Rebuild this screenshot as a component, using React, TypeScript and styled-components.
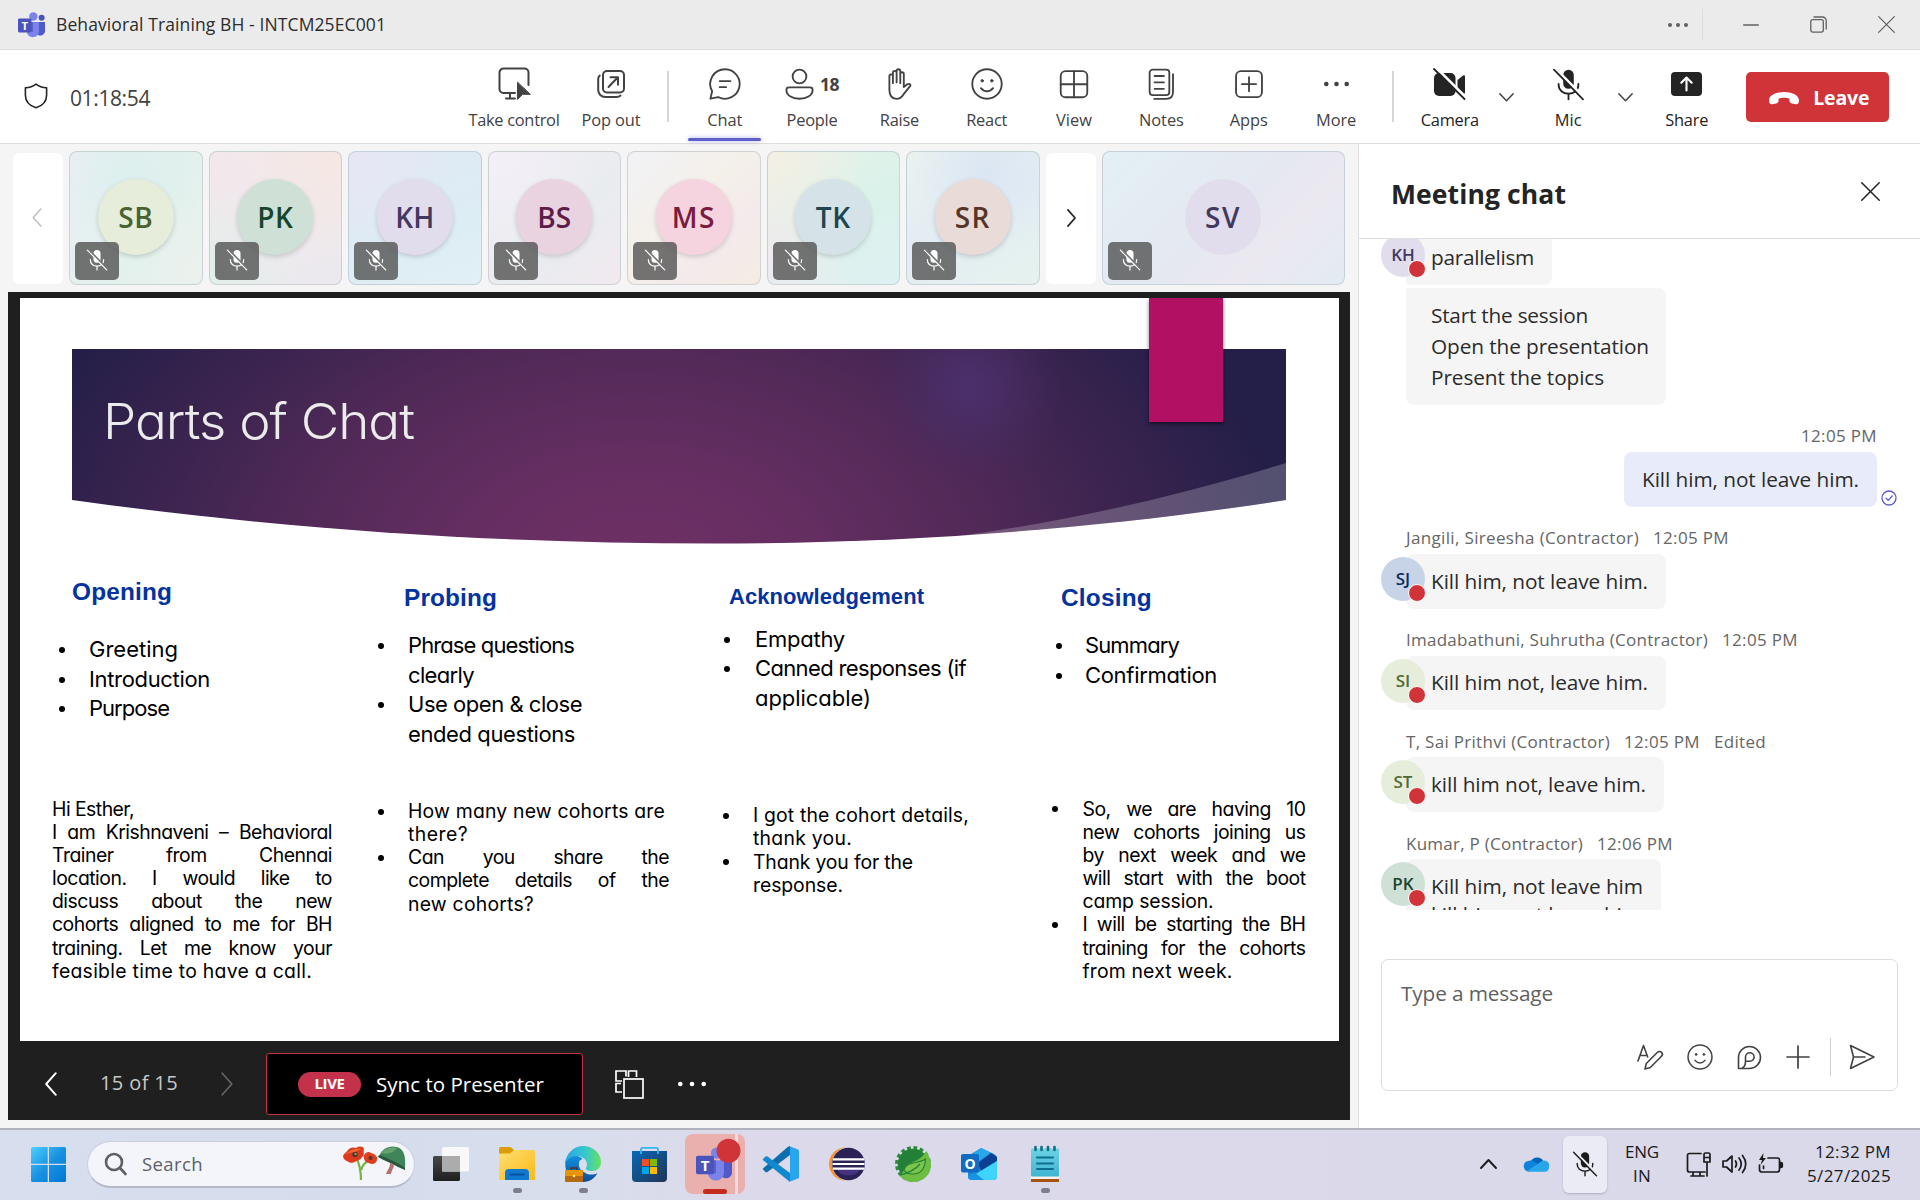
import React, { useLayoutEffect, useRef } from 'react';
import styled, { createGlobalStyle, css } from 'styled-components';

const ui = '"Open Sans", "Noto Sans", sans-serif';
const gothic = '"Century Gothic", Inter, Lato, sans-serif';

const GlobalStyle = createGlobalStyle`
  * { box-sizing: border-box; }
  body { margin: 0; background: #fff; font-family: ${ui}; color: #242424; overflow: hidden; }
  svg { display: block; flex: none; overflow: visible; }
  p, h1, h2, h3, ul { margin: 0; padding: 0; font-weight: inherit; }
`;

/* Text whose tracking is computed so that it fills a known width. */
const FitSpan = styled.span<{ $w: number }>`
  display: inline-block;
  width: ${(p) => p.$w}px;
  white-space: pre;
  flex: none;
`;

function Fit({ w, children }: { w: number; children: string }) {
  const ref = useRef<HTMLSpanElement>(null);
  useLayoutEffect(() => {
    const el = ref.current;
    if (!el) return;
    el.style.letterSpacing = '0px';
    const range = document.createRange();
    range.selectNodeContents(el);
    const scale = el.getBoundingClientRect().width / w;
    const natural = range.getBoundingClientRect().width / scale;
    el.style.letterSpacing = `${(w - natural) / children.length}px`;
  }, [w, children]);
  return <FitSpan ref={ref} $w={w}>{children}</FitSpan>;
}

const Window = styled.div`
  width: 1920px;
  height: 1200px;
  display: flex;
  flex-direction: column;
  background: #f5f5f5;
  overflow: hidden;
`;

/* ---------- title bar ---------- */

const TitleBar = styled.header`
  height: 50px;
  flex: none;
  display: flex;
  align-items: center;
  padding: 0 25px 0 18px;
  background: #ebebeb;
  border-bottom: 1px solid #dcdcdc;
  font-size: 17.5px;
  color: #2b2b2b;
`;

const TitleText = styled.h1`
  font-size: 17.5px;
  line-height: 24px;
  margin-left: 11px;
  margin-top: -2px;
  flex: 1;
`;

const WindowButtons = styled.div`
  display: flex;
  align-items: center;
  color: #616161;
`;

const TitleDivider = styled.i`
  width: 1px;
  height: 31px;
  background: #dedede;
  margin: 0 40px 0 14px;
`;

const Spacer = styled.i<{ $w: number }>`
  width: ${(p) => p.$w}px;
  flex: none;
`;

/* ---------- toolbar ---------- */

const Toolbar = styled.nav`
  height: 94px;
  flex: none;
  display: flex;
  background: #fff;
  border-bottom: 1px solid #dedede;
  color: #424242;
`;

const TimerBlock = styled.div`
  width: 457px;
  padding: 2px 0 0 24px;
  display: flex;
  align-items: center;
  gap: 22px;
  font-size: 21px;
  line-height: 28px;
  svg { color: #242424; margin-top: -3px; }
`;

const ToolButton = styled.div<{ $w: number; $dark?: boolean; $ml?: number }>`
  position: relative;
  width: ${(p) => p.$w}px;
  margin-left: ${(p) => p.$ml ?? 0}px;
  padding-top: 18px;
  display: flex;
  flex-direction: column;
  align-items: center;
  font-size: 16.4px;
  line-height: 24px;
  gap: 8px;
  color: ${(p) => (p.$dark ? '#242424' : '#424242')};
`;

const ToolIcon = styled.div`
  height: 32px;
  display: flex;
  align-items: center;
  gap: 6px;
  font-size: 17.5px;
  font-weight: 700;
`;

const ActiveLine = styled.i`
  position: absolute;
  left: 7px;
  right: 7px;
  bottom: 2px;
  height: 3px;
  border-radius: 2px;
  background: #5b5fc7;
  box-shadow: 0 0 4px rgba(91, 95, 199, 0.5);
`;

const ToolDivider = styled.i<{ $l: number; $r: number }>`
  width: 2px;
  height: 51px;
  margin: 21px ${(p) => p.$r}px 0 ${(p) => p.$l}px;
  background: #d6d6d6;
`;

const ChevronButton = styled.div<{ $w: number }>`
  width: ${(p) => p.$w}px;
  display: flex;
  justify-content: center;
  padding: 43px 0 0 2px;
`;

const LeaveButton = styled.button`
  margin: 22px 0 0 19px;
  width: 143px;
  height: 50px;
  border: 0;
  border-radius: 5px;
  background: #d13438;
  color: #fff;
  font: 700 19.5px/28px ${ui};
  display: flex;
  align-items: center;
  justify-content: center;
  gap: 14px;
  padding: 2px 0 0 4px;
`;

/* ---------- content split ---------- */

const Body = styled.main`
  height: 984px;
  flex: none;
  display: flex;
`;

const StageColumn = styled.section`
  width: 1358px;
  flex: none;
  padding: 7px 8px 0;
`;

const Gallery = styled.div`
  display: flex;
  align-items: center;
  height: 134px;
  padding-left: 5px;
  margin-bottom: 7px;
  gap: 6px;
`;

const PageArrow = styled.div<{ $dim?: boolean }>`
  width: 50px;
  height: 131px;
  border-radius: 6px;
  background: #fff;
  display: flex;
  align-items: center;
  justify-content: center;
  padding: 0 ${(p) => (p.$dim ? 2 : 0)}px 1px ${(p) => (p.$dim ? 0 : 2)}px;
  color: ${(p) => (p.$dim ? '#bdbdbd' : '#242424')};
`;

const Tile = styled.div<{ $bg: string; $wide?: boolean }>`
  position: relative;
  width: ${(p) => (p.$wide ? 243 : 133.5)}px;
  flex: none;
  height: 134px;
  padding-bottom: 2px;
  border: 1px solid rgba(150, 165, 170, 0.38);
  border-radius: 8px;
  background: ${(p) => p.$bg};
  display: flex;
  align-items: center;
  justify-content: center;
`;

const BigAvatar = styled.div<{ $bg: string; $fg: string; $flat?: boolean }>`
  width: 76px;
  height: 76px;
  border-radius: 50%;
  background: ${(p) => p.$bg};
  color: ${(p) => p.$fg};
  font-size: 28px;
  font-weight: 600;
  display: flex;
  align-items: center;
  justify-content: center;
  box-shadow: ${(p) => (p.$flat ? 'none' : '0 2px 5px rgba(0,0,0,.16)')};
`;

const MuteBadge = styled.div`
  position: absolute;
  left: 5px;
  bottom: 4px;
  width: 44px;
  height: 38px;
  padding-bottom: 2px;
  border-radius: 5px;
  background: rgba(82, 82, 82, 0.8);
  color: #fff;
  display: flex;
  align-items: center;
  justify-content: center;
`;

const Stage = styled.div`
  width: 1342px;
  height: 828px;
  background: #1f1f1f;
  padding: 6px 11px 0 12px;
`;

const Slide = styled.article`
  height: 743px;
  background: #fff;
  overflow: hidden;
  color: #000;
`;

const Banner = styled.div`
  position: relative;
  height: 246px;
  padding: 92px 0 0 83px;
`;

const BannerArt = styled.svg`
  position: absolute;
  left: 52px;
  top: 51px;
`;

const Ribbon = styled.i`
  position: absolute;
  left: 1129px;
  top: 0;
  width: 74px;
  height: 124px;
  background: #b11063;
  box-shadow: 0 2px 4px rgba(0, 0, 0, 0.5);
`;

const SlideTitle = styled.h2`
  position: relative;
  width: 400px;
  font: 300 49px/64px ${gothic};
  font-feature-settings: "cv11";
  color: #ebebeb;
  transform: scaleX(1.08);
  transform-origin: left center;
`;

const SlideRow = styled.div<{ $h: number }>`
  height: ${(p) => p.$h}px;
  display: grid;
  grid-template-columns: 350px 345px 330px 294px;
`;

const Cell = styled.div<{ $pt: number }>`
  padding-top: ${(p) => p.$pt}px;
`;

const CellHeading = styled.h3<{ $l: number; $s: number; $mb: number }>`
  font: 700 ${(p) => p.$s}px/30px "Liberation Sans", Arial, sans-serif;
  color: #0433a0;
  margin: 0 0 ${(p) => p.$mb}px ${(p) => p.$l}px;
`;

const small = css`
  font-size: 19.4px;
  line-height: 23.15px;
  letter-spacing: -0.5px;
`;

const Lines = styled.div<{ $small?: boolean; $l: number }>`
  font-family: ${gothic};
  font-feature-settings: "cv11";
  font-size: 22px;
  line-height: 29.6px;
  margin-left: ${(p) => p.$l}px;
  ${(p) => p.$small && small}
`;

const LineRow = styled.div`
  display: flex;
`;

const BulletBox = styled.span<{ $w: number; $on?: boolean }>`
  width: ${(p) => p.$w}px;
  flex: none;
  display: flex;
  align-items: center;
  &::before {
    content: '';
    width: 6px;
    height: 6px;
    border-radius: 50%;
    background: ${(p) => (p.$on ? '#000' : 'transparent')};
  }
`;

const Justified = styled.span<{ $w: number }>`
  width: ${(p) => p.$w}px;
  text-align: justify;
  text-align-last: justify;
  white-space: nowrap;
`;

const Controls = styled.div`
  height: 79px;
  display: flex;
  align-items: center;
  padding: 7px 0 0 25px;
  color: #fff;
`;

const PageCount = styled.span`
  margin: -3px 43px 0;
  font-size: 20px;
  line-height: 28px;
  color: #c8c8c8;
`;

const SyncButton = styled.div`
  width: 317px;
  height: 62px;
  margin: 0 32px 0 33px;
  border: 1px solid #c4314b;
  border-radius: 3px;
  background: #000;
  display: flex;
  align-items: center;
  padding-left: 31px;
  font-size: 20.5px;
`;

const LivePill = styled.span`
  width: 63px;
  height: 25px;
  border-radius: 13px;
  background: #c4314b;
  font-size: 15px;
  font-weight: 700;
  line-height: 23px;
  text-align: center;
  letter-spacing: -0.4px;
  margin-right: 15px;
`;

/* ---------- chat ---------- */

const ChatPanel = styled.aside`
  flex: 1;
  border-left: 1px solid #dedede;
  background: #fff;
  padding-bottom: 37px;
`;

const ChatHeader = styled.div`
  height: 95px;
  border-bottom: 1px solid #dedede;
  display: flex;
  align-items: center;
  justify-content: space-between;
  padding: 4px 40px 0 32px;
  font-size: 26.5px;
  font-weight: 700;
  line-height: 36px;
  span { margin-top: 2px; }
  svg { margin-top: -3px; }
`;

const MessageList = styled.div`
  height: 671px;
  overflow: hidden;
  padding-left: 22px;
`;

const Meta = styled.div<{ $own?: boolean }>`
  display: flex;
  gap: 14px;
  justify-content: ${(p) => (p.$own ? 'flex-end' : 'flex-start')};
  margin: 19.4px 43px 3.6px 25px;
  height: 24px;
  font-size: 17px;
  line-height: 24px;
  color: #666;
`;

const MessageRow = styled.div<{ $own?: boolean; $mt?: number }>`
  display: flex;
  margin-top: ${(p) => p.$mt ?? 0}px;
  justify-content: ${(p) => (p.$own ? 'flex-end' : 'flex-start')};
  padding-right: ${(p) => (p.$own ? 23 : 0)}px;
`;

const AvatarSlot = styled.div`
  position: relative;
  width: 44px;
  margin: 3px -19px 0 0;
  z-index: 1;
`;

const SmallAvatar = styled.div<{ $bg: string; $fg: string }>`
  width: 44px;
  height: 44px;
  border-radius: 50%;
  background: ${(p) => p.$bg};
  color: ${(p) => p.$fg};
  font-size: 17px;
  font-weight: 600;
  line-height: 43px;
  text-align: center;
`;

const BusyDot = styled.i`
  position: absolute;
  left: 27px;
  top: 27px;
  width: 18px;
  height: 18px;
  border-radius: 50%;
  background: #d13438;
  border: 1px solid #fff;
`;

const Bubble = styled.div<{ $w: number; $r: string; $own?: boolean }>`
  width: ${(p) => p.$w}px;
  padding: 11.9px 0 11.5px ${(p) => (p.$own ? 18 : 25)}px;
  border-radius: ${(p) => p.$r};
  background: ${(p) => (p.$own ? '#e8ebfa' : '#f5f5f5')};
  font-size: 20.8px;
  line-height: 31.4px;
  color: #2b2b2b;
  display: flex;
  flex-direction: column;
  span + span { margin-top: -0.2px; }
`;

const SeenMark = styled.div`
  align-self: flex-end;
  margin: 0 0 1px 4px;
  color: #5b5fc7;
`;

const Compose = styled.div`
  width: 517px;
  height: 132px;
  margin: 49px 0 0 22px;
  border: 1px solid #dcdcdc;
  border-radius: 7px;
  display: flex;
  flex-direction: column;
  justify-content: space-between;
  padding: 18px 22px 14px 19px;
  font-size: 20.8px;
  line-height: 30px;
  color: #616161;
`;

const ComposeTools = styled.div`
  display: flex;
  align-items: center;
  justify-content: flex-end;
  gap: 24px;
  color: #424242;
`;

const ComposeDivider = styled.i`
  width: 1px;
  height: 38px;
  background: #d1d1d1;
  margin: 0 -6px 0 -4px;
`;

/* ---------- taskbar ---------- */

const Taskbar = styled.footer`
  height: 72px;
  flex: none;
  display: flex;
  align-items: center;
  padding: 0 29px 2px 31px;
  border-top: 2px solid #b0b2be;
  background: linear-gradient(90deg, #d7deee 0%, #d5dcec 20%, #d7dfed 29%, #dbd9ea 38%, #dad9ea 100%);
`;

const SearchBox = styled.div`
  width: 328px;
  height: 47px;
  margin: 0 19px 0 21px;
  border-radius: 24px;
  border: 1px solid #c9cfe0;
  border-bottom: 2px solid #b4bacb;
  background: #f3f5fb;
  display: flex;
  align-items: center;
  padding: 0 9px 0 16px;
  font-size: 18.5px;
  color: #5c5f66;
  svg:first-child { margin-right: 15px; }
`;

const TaskApp = styled.div<{ $active?: boolean }>`
  position: relative;
  width: 60px;
  height: 60px;
  margin-right: 6.05px;
  flex: none;
  display: flex;
  align-items: center;
  justify-content: center;
  border-radius: 8px;
  ${(p) => p.$active && css`
    background: linear-gradient(90deg, #e9b0ae 0 50px, #f0d9df 50px 53px, #e9b0ae 53px);
    svg { margin-left: -2px; }
  `}
`;

const RunMark = styled.i<{ $active?: boolean }>`
  position: absolute;
  left: ${(p) => (p.$active ? 18 : 25.5)}px;
  bottom: ${(p) => (p.$active ? 0.5 : 1)}px;
  width: ${(p) => (p.$active ? 24 : 9)}px;
  height: 5px;
  border-radius: 3px;
  background: ${(p) => (p.$active ? '#c42b1c' : '#7d7f8b')};
`;

const Tray = styled.div`
  margin-left: auto;
  display: flex;
  align-items: center;
  color: #1b1b1b;
  font-size: 17px;
  line-height: 24px;
`;

const TrayMic = styled.div`
  width: 44px;
  height: 57px;
  margin: 0 18px 0 14px;
  border-radius: 6px;
  background: #ebebf5;
  box-shadow: 0 1px 2px rgba(90, 90, 130, 0.35);
  display: flex;
  align-items: center;
  justify-content: center;
`;

const TrayText = styled.div<{ $right?: boolean }>`
  display: flex;
  flex-direction: column;
  align-items: ${(p) => (p.$right ? 'flex-end' : 'center')};
`;

/* ---------- icons ---------- */

type IconProps = { w?: number; h?: number; vb?: string; sw?: number; fill?: string; children: React.ReactNode };
const Icon = ({ w = 32, h, vb = '0 0 20 20', sw = 1.15, fill = 'none', children }: IconProps) => (
  <svg width={w} height={h ?? w} viewBox={vb} fill={fill} stroke="currentColor" strokeWidth={sw} strokeLinecap="round" strokeLinejoin="round">
    {children}
  </svg>
);

const Dots = ({ w = 26, r = 2.1 }: { w?: number; r?: number }) => (
  <svg width={w} height="8" viewBox={`0 0 ${w} 8`} fill="currentColor">
    <circle cx={r} cy="4" r={r} /><circle cx={w / 2} cy="4" r={r} /><circle cx={w - r} cy="4" r={r} />
  </svg>
);

const Cross = ({ s = 18, sw = 1.3 }: { s?: number; sw?: number }) => (
  <Icon w={s} vb="0 0 18 18" sw={sw}><path d="M.7.7l16.6 16.6M17.3.7L.7 17.3" /></Icon>
);

const ChevronDown = () => <Icon w={15} h={9} vb="0 0 15 9" sw={1.5}><path d="M.8.8l6.7 7 6.7-7" /></Icon>;

const Smile = ({ w = 32 }: { w?: number }) => (
  <Icon w={w}>
    <circle cx="10" cy="10" r="9.2" />
    <circle cx="7" cy="8" r=".75" fill="currentColor" stroke="currentColor" strokeWidth=".6" />
    <circle cx="13" cy="8" r=".75" fill="currentColor" stroke="currentColor" strokeWidth=".6" />
    <path d="M6.2 12.6c2 2.6 5.6 2.6 7.6 0" />
  </Icon>
);

const MicOff = ({ w = 32, gap = '#fff' }: { w?: number; gap?: string }) => (
  <Icon w={w} sw={1.1}>
    <rect x="6.8" y="1" width="6.4" height="11.6" rx="3.2" fill="currentColor" stroke="none" />
    <path d="M4 9.6v.6c0 3.2 2.6 5.4 6 5.4s6-2.2 6-5.4v-.6M10 15.6V19" />
    <path d="M2.3.6L19.6 18" stroke={gap} strokeWidth="1.7" />
    <path d="M1.2 1L18.8 19" />
  </Icon>
);

const TeamsLogo = ({ w = 27, alert }: { w?: number; alert?: boolean }) => (
  <svg width={w} height={w * 0.96} viewBox="0 0 36 34">
    <circle cx="31.5" cy="7.5" r="4" fill="#4b53bc" />
    <path d="M24 13h12v11a6 6 0 0 1-12 2z" fill="#5059c9" />
    <circle cx="20.5" cy="5.8" r="5.6" fill="#7b83eb" />
    <path d="M12 13h16v12.5a8.2 8.2 0 0 1-16 2z" fill="#7b83eb" />
    <path d="M12 13h8v13H12z" fill="#454cae" opacity=".6" />
    <rect y="8.5" width="18" height="18.5" rx="1.8" fill="#4b53bc" />
    <text x="9" y="23.3" textAnchor="middle" fontFamily="Open Sans, sans-serif" fontWeight="700" fontSize="15" fill="#fff">T</text>
    {alert && <circle cx="32.500" cy="3.500" r="12" fill="#d13438" />}
  </svg>
);

const tools: { label: string; w: number; icon: React.ReactNode; active?: boolean }[] = [
  { label: 'Chat', w: 35, active: true, icon: (
    <Icon><path d="M10 .8a9.2 9.2 0 1 1-4.300 17.350L.9 19.200l1.050-4.700A9.200 9.200 0 0 1 10 .8z" /><path d="M6.700 8.200h6.700M6.700 12h4" /></Icon>) },
  { label: 'People', w: 51, icon: (
    <><Icon w={29} h={32} vb="0 0 18 20"><circle cx="9" cy="5.300" r="4.300" /><path d="M2.500 12.100h13c1 0 1.700.7 1.700 1.600 0 3.200-3.400 5.500-8.200 5.500S.8 16.900.8 13.700c0-.9.7-1.600 1.700-1.600z" /></Icon><Fit w={19}>18</Fit></>) },
  { label: 'Raise', w: 39, icon: (
    <Icon><path d="M4 10.800V5.100c0-1.500 2.200-1.500 2.200 0V9.500 2.900c0-1.500 2.300-1.500 2.300 0V9 1.900c0-1.500 2.300-1.500 2.300 0V9.500 3.700c0-1.400 2.200-1.400 2.200 0v8.200l2.200-1.700c1.300-.7 2.600.2 1.600 1.300l-4 5c-1 1.600-2.300 2.800-4.400 2.800-2.900 0-4.400-2.300-4.400-5.500z" /></Icon>) },
  { label: 'React', w: 41, icon: <Smile /> },
  { label: 'View', w: 36, icon: <Icon><rect x="1.700" y="2" width="16.600" height="16.300" rx="3" /><path d="M10 2v16.300M1.700 10.150h16.600" /></Icon> },
  { label: 'Notes', w: 45, icon: (
    <Icon><rect x="2.900" y="1" width="12.300" height="16" rx="2" /><path d="M6 5h5.800M6 9h5.800M6 13h5.800M17.500 3.800v11.200c0 2.700-1.500 4.300-4.200 4.300H5.800" /></Icon>) },
  { label: 'Apps', w: 38, icon: <Icon><rect x="1.900" y="2" width="16.200" height="16.200" rx="3" /><path d="M10 5.700v8.800M5.600 10.100h8.800" /></Icon> },
  { label: 'More', w: 40, icon: <Dots w={25} r={2.3} /> },
];

const ChevronSide = ({ right, w = 10, h = 19, sw = 1.5 }: { right?: boolean; w?: number; h?: number; sw?: number }) => (
  <Icon w={w} h={h} vb="0 0 10 20" sw={sw}><path d={right ? 'M1 1l8 9-8 9' : 'M9 1l-8 9 8 9'} /></Icon>
);

const people = [
  { n: 'SB', w: 35, bg: '#e6eddb', fg: '#4a6232', g: 'radial-gradient(circle at 45% 20%, #dcefee, transparent 60%), linear-gradient(120deg, #eceef6, #e2f1ec 55%, #edf1ee)' },
  { n: 'PK', w: 36, bg: '#cfe1d7', fg: '#17452c', g: 'radial-gradient(circle at 100% 0%, #f6e8e2, transparent 60%), radial-gradient(circle at 0% 100%, #e0f0ea, transparent 50%), linear-gradient(150deg, #f3e8ec, #ebe9ee)' },
  { n: 'KH', w: 39, bg: '#e2dded', fg: '#42395f', g: 'radial-gradient(circle at 0% 0%, #e7e6f4, transparent 60%), linear-gradient(160deg, #dfe9f4, #ddedf4 60%, #e1eff6)' },
  { n: 'BS', w: 34, bg: '#ead3e1', fg: '#5d1d48', g: 'radial-gradient(circle at 0% 0%, #f4eff7, transparent 60%), linear-gradient(135deg, #eeeef4, #e9ecef 60%, #f1e9ef)' },
  { n: 'MS', w: 44, bg: '#f5d3df', fg: '#7a1c3d', g: 'linear-gradient(135deg, #f2f2f6, #f4f0e9 45%, #f4eaec 70%, #f5ece2)' },
  { n: 'TK', w: 35, bg: '#d5e3e9', fg: '#1f4650', g: 'radial-gradient(circle at 0% 0%, #f4efe4, transparent 55%), radial-gradient(circle at 0% 80%, #f0e9ef, transparent 50%), linear-gradient(150deg, #e8f2e8, #daf2ea 50%, #dff1f3)' },
  { n: 'SR', w: 36, bg: '#e9dcd8', fg: '#563528', g: 'radial-gradient(circle at 60% 15%, #dbe6f3, transparent 55%), linear-gradient(150deg, #eaf2ef, #e3ecf3 50%, #e6f2ee)' },
];

const Muted = () => <MuteBadge><MicOff w={22} gap="#747474" /></MuteBadge>;

/* ---------- slide content ---------- */

type TextLine = { t: string; w: number; b?: boolean; j?: boolean };

function TextBlock({ left, bullet, lines, isSmall }: { left: number; bullet: number; lines: TextLine[]; isSmall?: boolean }) {
  return (
    <Lines $l={left} $small={isSmall}>
      {lines.map((l) => (
        <LineRow key={l.t}>
          {bullet > 0 && <BulletBox $w={bullet} $on={l.b} />}
          {l.j ? <Justified $w={l.w}>{l.t}</Justified> : <Fit w={l.w}>{l.t}</Fit>}
        </LineRow>
      ))}
    </Lines>
  );
}

const upper = [
  { h: 'Opening', hw: 100, s: 24.4, hl: 52, pt: 33, mb: 28.2, l: 39, b: 30, lines: [
    { t: 'Greeting', w: 89, b: true }, { t: 'Introduction', w: 121, b: true }, { t: 'Purpose', w: 80, b: true }] },
  { h: 'Probing', hw: 93, s: 24.4, hl: 34, pt: 38.5, mb: 18.7, l: 8, b: 30, lines: [
    { t: 'Phrase questions', w: 166, b: true }, { t: 'clearly', w: 66 }, { t: 'Use open & close', w: 174, b: true }, { t: 'ended questions', w: 167 }] },
  { h: 'Acknowledgement', hw: 195, s: 22, hl: 14, pt: 38, mb: 12.9, l: 9, b: 31, lines: [
    { t: 'Empathy', w: 90, b: true }, { t: 'Canned responses (if', w: 211, b: true }, { t: 'applicable)', w: 116 }] },
  { h: 'Closing', hw: 91, s: 24.4, hl: 16, pt: 38.5, mb: 18.7, l: 11, b: 29, lines: [
    { t: 'Summary', w: 94, b: true }, { t: 'Confirmation', w: 132, b: true }] },
];

const lower = [
  { pt: 33.7, l: 32, b: 0, lines: [
    { t: 'Hi Esther,', w: 82 }, { t: 'I am Krishnaveni – Behavioral', w: 280, j: true }, { t: 'Trainer from Chennai', w: 280, j: true },
    { t: 'location. I would like to', w: 280, j: true }, { t: 'discuss about the new', w: 280, j: true }, { t: 'cohorts aligned to me for BH', w: 280, j: true },
    { t: 'training. Let me know your', w: 280, j: true }, { t: 'feasible time to have a call.', w: 260 }] },
  { pt: 36, l: 8, b: 30, lines: [
    { t: 'How many new cohorts are', w: 257, b: true }, { t: 'there?', w: 60 }, { t: 'Can you share the', w: 261, b: true, j: true },
    { t: 'complete details of the', w: 261, j: true }, { t: 'new cohorts?', w: 126 }] },
  { pt: 40.3, l: 8, b: 30, lines: [
    { t: 'I got the cohort details,', w: 216, b: true }, { t: 'thank you.', w: 99 }, { t: 'Thank you for the', w: 160, b: true }, { t: 'response.', w: 90 }] },
  { pt: 33.7, l: 7, b: 30.5, lines: [
    { t: 'So, we are having 10', w: 223, b: true, j: true }, { t: 'new cohorts joining us', w: 223, j: true }, { t: 'by next week and we', w: 223, j: true },
    { t: 'will start with the boot', w: 223, j: true }, { t: 'camp session.', w: 131 }, { t: 'I will be starting the BH', w: 223, b: true, j: true },
    { t: 'training for the cohorts', w: 223, j: true }, { t: 'from next week.', w: 150 }] },
];

/* ---------- chat content ---------- */

const messages = [
  { who: 'Jangili, Sireesha (Contractor)', ww: 233, time: '12:05 PM', a: 'SJ', bg: '#c7d4e8', fg: '#0c2a5c', w: 260, lines: [['Kill him, not leave him.', 217]] },
  { who: 'Imadabathuni, Suhrutha (Contractor)', ww: 302, time: '12:05 PM', a: 'SI', bg: '#e6eddb', fg: '#4f6b35', w: 260, lines: [['Kill him not, leave him.', 217]] },
  { who: 'T, Sai Prithvi (Contractor)', ww: 204, time: '12:05 PM', edited: true, a: 'ST', bg: '#e6eddb', fg: '#4f6b35', w: 258, lines: [['kill him not, leave him.', 215]] },
  { who: 'Kumar, P (Contractor)', ww: 177, time: '12:06 PM', a: 'PK', bg: '#cfe1d7', fg: '#17452c', w: 255, lines: [['Kill him, not leave him', 212], ['kill him, not leave him', 210]] },
] as { who: string; ww: number; time: string; edited?: boolean; a: string; bg: string; fg: string; w: number; lines: [string, number][] }[];

const LastLine = styled.div`
  margin-top: -3px;
  line-height: 31.4px;
`;

const Avatar = ({ a, bg, fg }: { a: string; bg: string; fg: string }) => (
  <AvatarSlot><SmallAvatar $bg={bg} $fg={fg}>{a}</SmallAvatar><BusyDot /></AvatarSlot>
);

/* ---------- taskbar apps ---------- */

const StartLogo = () => (
  <svg width="35" height="35" viewBox="0 0 35 35">
    <defs><linearGradient id="win" x1="0" y1="0" x2="1" y2="1"><stop offset="0" stopColor="#4cd0ff" /><stop offset=".5" stopColor="#1992e2" /><stop offset="1" stopColor="#0078d4" /></linearGradient></defs>
    <path fill="url(#win)" d="M1.500 0H16.700V16.700H0V1.500A1.500 1.500 0 0 1 1.500 0zM18 0H33.500A1.500 1.500 0 0 1 35 1.500V16.700H18zM0 18H16.700V35H1.500A1.500 1.500 0 0 1 0 33.500zM18 18H35V33.500A1.500 1.500 0 0 1 33.500 35H18z" />
  </svg>
);

const Poppies = () => (
  <svg width="64" height="36" viewBox="0 0 64 36">
    <path d="M13 11c3 6 5 12 5 23M26 14c-4 3-7 5-7.500 10" fill="none" stroke="#78b445" strokeWidth="2.200" />
    <path d="M0 10c1-3 4-4 5-6 2-3 6-3 8-2 3-2 7-2 8 1-1 3 1 6-2 8-1 3-4 3-5 4-3 1-6 3-8 1C3 15 0 13 0 10z" fill="#dd3a1d" />
    <path d="M2 9c3-4 10-7 17-6-4 1-6 2-8 4-3-1-6 0-9 2z" fill="#f26a3a" />
    <circle cx="12" cy="8.500" r="2.700" fill="#4a3b34" /><circle cx="12.500" cy="8" r="1" fill="#d9a441" />
    <path d="M21 9c2-3 5-4 7-2 4 1 7 4 6 7-1 4-5 5-8 3-4 0-6-5-5-8z" fill="#df3d20" /><circle cx="27.500" cy="12" r="2" fill="#4a3b34" />
    <path d="M47 17l4 2c0 3-2 4-3 9h-5c1-4 4-5 4-11z" fill="#b5706f" />
    <path d="M36 11C38 3 46-1 54 1c7 2 9 9 8 22l-6-3c-7-5-13-6-20-9z" fill="#40845a" />
    <path d="M38 7c4-5 11-7 16-5-3 4-9 7-16 5z" fill="#63a26c" />
    <path d="M36 9c7 2 14 6 20 9l6 4v2l-7-3c-7-4-13-6-20-10z" fill="#28583b" />
  </svg>
);

const TaskViewIcon = () => (
  <svg width="36" height="34" viewBox="0 0 36 34">
    <defs><linearGradient id="tv" x1="0" y1="0" x2="0" y2="1"><stop offset="0" stopColor="#474747" /><stop offset="1" stopColor="#1f1f1f" /></linearGradient></defs>
    <rect y="9" width="27" height="25" rx="1.500" fill="url(#tv)" /><rect x="9" width="27" height="24.500" rx="1.500" fill="#f8f8f8" /><path d="M9 9h18v15.500H9z" fill="#acacac" />
  </svg>
);

const FolderIcon = () => (
  <svg width="36" height="34" viewBox="0 0 36 34">
    <defs><linearGradient id="fo" x1="0" y1="0" x2="1" y2="1"><stop offset="0" stopColor="#ffdf74" /><stop offset="1" stopColor="#fbb916" /></linearGradient></defs>
    <path d="M0 2Q0 0 2 0h9q2 0 4 3.500L11 8H0z" fill="#dc9c05" />
    <path d="M0 6.500h11l4-3.500h19.500Q36 3 36 5v27q0 1-1.500 1h-33Q0 33 0 32z" fill="url(#fo)" />
    <path d="M6 33V26q0-4 4-4h16q4 0 4 4v7z" fill="#0f79cf" /><path d="M11 27.500h14" stroke="#09519a" strokeWidth="2" strokeLinecap="round" />
  </svg>
);

const EdgeIcon = () => (
  <svg width="36" height="36" viewBox="0 0 36 36">
    <defs>
      <linearGradient id="ed1" x1="0" y1=".3" x2="1" y2=".3"><stop offset="0" stopColor="#2aa5de" /><stop offset=".55" stopColor="#35c6d0" /><stop offset="1" stopColor="#66e25d" /></linearGradient>
      <linearGradient id="ed2" x1="0" y1="0" x2="0" y2="1"><stop offset="0" stopColor="#1193e0" /><stop offset="1" stopColor="#0d4c97" /></linearGradient>
    </defs>
    <path d="M1 13C-2 25 5 36 18 36c7 0 12-4 14.500-9-4 2-9 2-12 0-5-2-8-7-6-12 1-1 2-2 3-2C13 8 4 8 1 13z" fill="url(#ed2)" />
    <path d="M0 18C1 7 9 0 18 0c10 0 18 7 18 16 0 6-4 9-9 9-4 0-7-1-6-3 3-5-1-12-9-12C6 10 2 13 0 18z" fill="url(#ed1)" />
    <rect y="24" width="18" height="12" rx="1" fill="#b86a10" /><path d="M0 24h18v6H0z" fill="#e89408" /><path d="M6 24v-2h6v2" fill="none" stroke="#52351b" strokeWidth="1.500" /><circle cx="9" cy="30" r="1.300" fill="#ffe08a" />
  </svg>
);

const StoreIcon = () => (
  <svg width="35" height="35" viewBox="0 0 35 35">
    <defs><linearGradient id="st" x1="0" y1="0" x2="1" y2="1"><stop offset="0" stopColor="#0a67b8" /><stop offset="1" stopColor="#203554" /></linearGradient></defs>
    <path d="M9 7V2.500Q9 .8 10.500.8h14Q26 .8 26 2.500V7" fill="none" stroke="#34b6ee" strokeWidth="1.800" />
    <path d="M0 4h35v27q0 4-4 4H4q-4 0-4-4z" fill="url(#st)" /><path d="M9 4v3M26 4v3" stroke="#34b6ee" strokeWidth="1.800" />
    <path d="M10 12h7v7h-7z" fill="#f25022" /><path d="M18 12h7v7h-7z" fill="#7fba00" /><path d="M10 20h7v7h-7z" fill="#00a4ef" /><path d="M18 20h7v7h-7z" fill="#ffb900" />
  </svg>
);

const CodeIcon = () => (
  <svg width="36" height="36" viewBox="0 0 36 36">
    <path d="M27 0v9L4.500 26q-1 .6-2 0L0 23.500q-.5-.8.500-1.500L25 .8z" fill="#0d6fb0" />
    <path d="M0 13l2.500-2.500q1-.6 2 0L27 27v9L.5 14.500q-1-.7-.5-1.500z" fill="#1089cf" />
    <path d="M26 0l9 3.500q1 .5 1 1.500v26q0 1-1 1.500L26 36q1-.7 1-2V2q0-1.300-1-2z" fill="#27a5ee" />
  </svg>
);

const EclipseIcon = () => (
  <svg width="36" height="34" viewBox="0 0 36 34">
    <circle cx="16.500" cy="17" r="16.500" fill="#f7942a" /><circle cx="20" cy="17" r="17" fill="#dcd9ea" /><circle cx="19.500" cy="17" r="16.300" fill="#2c2155" />
    <path d="M8 22a12 9 0 0 0 23 0z" fill="#45337f" />
    <path d="M4 12.400h31M3.500 17h32M4 21.600h31" stroke="#fff" strokeWidth="2.200" />
  </svg>
);

const SpringIcon = () => (
  <svg width="36" height="36" viewBox="0 0 36 36">
    <circle cx="18" cy="18" r="16.300" fill="none" stroke="#2c8a3a" strokeWidth="3.400" strokeDasharray="3.700 2.700" />
    <circle cx="18" cy="18" r="15.300" fill="#238137" />
    <path d="M31.500 5c2 5 4.500 8 4.500 14 0 10-8 17-18 17-6 0-11-3-14-7 5-1 5-8 10-11 6-3 13-5 17.500-13z" fill="#6fbe44" />
    <path d="M30.500 13C30 22 26 28 18 28c-5 0-8-2-9-4 2-9 15-6 21.500-11z" fill="#7cc44c" stroke="#238137" strokeWidth="1.100" />
    <path d="M5 29c9-2 15-5 20-11" stroke="#238137" strokeWidth="1.300" fill="none" />
  </svg>
);

const OutlookIcon = () => (
  <svg width="36" height="32" viewBox="0 0 36 32">
    <path d="M7 8L20 0l13 6q3 2 3 4v18q0 4-4 4H11q-4 0-4-4z" fill="#1a86d9" />
    <path d="M8 9L20 0l10 5-14 9z" fill="#28a8ea" /><path d="M17 15L30 5l6 4v4L20 23z" fill="#0b3f91" />
    <path d="M36 13v15q0 4-4 4H16l-3-5z" fill="#3fd4fb" /><path d="M13 24l10 8H11q-4 0-4-4z" fill="#1793e6" />
    <rect y="6" width="18" height="18.500" rx="2" fill="#0f6cc0" />
    <text x="9" y="20.500" textAnchor="middle" fontFamily="Open Sans, sans-serif" fontSize="14" fontWeight="700" fill="#fff">O</text>
  </svg>
);

const NotepadIcon = () => (
  <svg width="28" height="36" viewBox="0 0 28 36">
    <defs><linearGradient id="np" x1="0" y1="0" x2="0" y2="1"><stop offset="0" stopColor="#6cd3e4" /><stop offset="1" stopColor="#40b4d2" /></linearGradient></defs>
    <path d="M0 31h28v5H0z" fill="#a9520f" /><path d="M0 28h28v5H0z" fill="#f4f0ec" /><rect y="2.500" width="28" height="28" rx="1" fill="url(#np)" />
    <path d="M4.500 1v3M10.500 1v3M17 1v3M23.500 1v3" stroke="#116d87" strokeWidth="2.600" strokeLinecap="round" />
    <path d="M6 11.500h16M6 17.500h16M6 23h16" stroke="#0f6d90" strokeWidth="2" strokeLinecap="round" />
  </svg>
);

const apps: { icon: React.ReactNode; running?: boolean; active?: boolean }[] = [
  { icon: <TaskViewIcon /> }, { icon: <FolderIcon />, running: true }, { icon: <EdgeIcon />, running: true }, { icon: <StoreIcon /> },
  { icon: <TeamsLogo w={36} alert />, running: true, active: true }, { icon: <CodeIcon /> }, { icon: <EclipseIcon /> }, { icon: <SpringIcon /> },
  { icon: <OutlookIcon /> }, { icon: <NotepadIcon />, running: true },
];

const AppsRow = styled.div`
  display: flex;
  margin-left: -13px;
`;

export default function App() {
  return (
    <Window>
      <GlobalStyle />
      <TitleBar>
        <TeamsLogo />
        <TitleText><Fit w={330}>Behavioral Training BH - INTCM25EC001</Fit></TitleText>
        <WindowButtons>
          <Dots w={20} r={2} />
          <TitleDivider />
          <Icon w={16} h={2} vb="0 0 16 2" sw={1.4}><path d="M.7 1h14.600" /></Icon>
          <Spacer $w={51} />
          <Icon w={17} vb="0 0 17 17" sw={1.3}><rect x=".8" y="3.600" width="12.500" height="12.500" rx="2" /><path d="M4 1h8.500A3.700 3.700 0 0 1 16.200 4.700V13" /></Icon>
          <Spacer $w={51} />
          <Cross s={17} />
        </WindowButtons>
      </TitleBar>

      <Toolbar>
        <TimerBlock>
          <Icon w={24} h={26} vb="0 0 24 26" sw={1.6}><path d="M12 1.200c3 2.400 6.400 3.500 10.600 3.600v7.400c0 6-3.800 10.400-10.600 12.600C5.200 22.600 1.400 18.200 1.400 12.200V4.800C5.600 4.700 9 3.600 12 1.200z" /></Icon>
          <Fit w={80}>01:18:54</Fit>
        </TimerBlock>
        <ToolButton $w={114}>
          <ToolIcon>
            <Icon w={34} h={34} vb="0 0 34 34" sw={2}>
              <path d="M18 26H6.500A4 4 0 0 1 2.500 22V5.500a4 4 0 0 1 4-4h21a4 4 0 0 1 4 4V18M13 26v5.500M9 31.500h9" />
              <path d="M20.500 15.500v17l5-5.200h7.500z" fill="currentColor" strokeWidth="1" />
            </Icon>
          </ToolIcon>
          <Fit w={91}>Take control</Fit>
        </ToolButton>
        <ToolButton $w={80}>
          <ToolIcon>
            <Icon w={28} h={28} vb="0 0 28 28" sw={2}>
              <rect x="6" y="1" width="21" height="21.500" rx="4" />
              <path d="M2.800 5.500C1.500 6.500 1.200 7.500 1.200 9v11a7 7 0 0 0 7 7h11.500c1.700 0 2.800-.4 3.800-1.400" />
              <path d="M11.500 17l9.500-9.700M13.500 7.200H21v7.500" />
            </Icon>
          </ToolIcon>
          <Fit w={59}>Pop out</Fit>
        </ToolButton>
        <ToolDivider $l={16} $r={12} />
        {tools.map((t) => (
          <ToolButton key={t.label} $w={87.35}>
            <ToolIcon>{t.icon}</ToolIcon>
            <Fit w={t.w}>{t.label}</Fit>
            {t.active && <ActiveLine />}
          </ToolButton>
        ))}
        <ToolDivider $l={12} $r={16} />
        <ToolButton $w={80} $dark>
          <ToolIcon>
            <Icon w={33} h={32} vb="0 0 33 32" sw={1.8}>
              <rect x="1" y="5" width="21.500" height="23" rx="5" fill="currentColor" stroke="none" />
              <path d="M24.500 12l5.500-4.500q2-1 2 1v16q0 2-2 1L24.500 21z" fill="currentColor" stroke="none" />
              <path d="M3.500 0L33 29.500" stroke="#fff" strokeWidth="2.500" /><path d="M1 1l30.500 30" />
            </Icon>
          </ToolIcon>
          <Fit w={58}>Camera</Fit>
        </ToolButton>
        <ChevronButton $w={32}><ChevronDown /></ChevronButton>
        <ToolButton $w={93} $dark><ToolIcon><MicOff w={33} /></ToolIcon><Fit w={27}>Mic</Fit></ToolButton>
        <ChevronButton $w={20}><ChevronDown /></ChevronButton>
        <ToolButton $w={80} $ml={12} $dark>
          <ToolIcon>
            <Icon w={31} h={24} vb="0 0 31 24" sw={2.1}>
              <rect width="31" height="24" rx="4" fill="currentColor" stroke="none" /><path d="M15.500 18.500V6M10.300 10.700L15.500 5.500l5.200 5.200" stroke="#fff" />
            </Icon>
          </ToolIcon>
          <Fit w={43}>Share</Fit>
        </ToolButton>
        <LeaveButton>
          <svg width="30" height="13" viewBox="0 0 30 13" fill="#fff"><path d="M15 0C22 0 30 2.800 30 8.500c0 3-1.300 4-3 3.700l-4.200-.8c-1.500-.3-2.200-1.200-2.300-2.700l-.2-2.200C17.500 5.400 12.500 5.400 9.700 6.500l-.2 2.200c-.1 1.500-.8 2.400-2.300 2.700L3 12.200C1.300 12.500 0 11.500 0 8.500 0 2.800 8 0 15 0z" /></svg>
          <Fit w={56}>Leave</Fit>
        </LeaveButton>
      </Toolbar>

      <Body>
        <StageColumn>
          <Gallery>
            <PageArrow $dim><ChevronSide w={10} h={19} /></PageArrow>
            {people.map((p) => (
              <Tile key={p.n} $bg={p.g}>
                <BigAvatar $bg={p.bg} $fg={p.fg}><Fit w={p.w}>{p.n}</Fit></BigAvatar>
                <Muted />
              </Tile>
            ))}
            <PageArrow><ChevronSide right w={9} h={18} sw={1.9} /></PageArrow>
            <Tile $wide $bg="linear-gradient(135deg, #e3f0f5, #e5e8f1 50%, #ebe8f0 70%, #e3ebf3)">
              <BigAvatar $flat $bg="#e2dded" $fg="#42395f"><Fit w={36}>SV</Fit></BigAvatar>
              <Muted />
            </Tile>
          </Gallery>

          <Stage>
            <Slide>
              <Banner>
                <BannerArt width="1214" height="195" viewBox="0 0 1214 195">
                  <defs>
                    <radialGradient id="base" gradientUnits="userSpaceOnUse" cx="0" cy="0" r="1" gradientTransform="translate(565 225) scale(650 430)">
                      <stop offset="0" stopColor="#703066" /><stop offset=".28" stopColor="#642e61" /><stop offset=".55" stopColor="#502957" />
                      <stop offset=".8" stopColor="#37234e" /><stop offset="1" stopColor="#241f48" />
                    </radialGradient>
                    <radialGradient id="glow" gradientUnits="userSpaceOnUse" cx="897" cy="38" r="95">
                      <stop offset="0" stopColor="#4c306c" /><stop offset=".5" stopColor="#4a2e68" stopOpacity=".55" /><stop offset="1" stopColor="#452a60" stopOpacity="0" />
                    </radialGradient>
                  </defs>
                  <path d="M0 0H1214V151C1040 178 850 194.500 640 194.500C420 194.500 210 180 0 151z" fill="url(#base)" />
                  <path d="M780 0h230v140H780z" fill="url(#glow)" />
                  <path d="M880 188C1000 172 1110 146 1214 114V151C1110 167 1000 180 880 188z" fill="#fff" opacity=".22" />
                </BannerArt>
                <SlideTitle><Fit w={288}>Parts of Chat</Fit></SlideTitle>
                <Ribbon />
              </Banner>
              <SlideRow $h={220}>
                {upper.map((c) => (
                  <Cell key={c.h} $pt={c.pt}>
                    <CellHeading $l={c.hl} $s={c.s} $mb={c.mb}><Fit w={c.hw}>{c.h}</Fit></CellHeading>
                    <TextBlock left={c.l} bullet={c.b} lines={c.lines} />
                  </Cell>
                ))}
              </SlideRow>
              <SlideRow $h={277}>
                {lower.map((c, i) => (
                  <Cell key={i} $pt={c.pt}><TextBlock isSmall left={c.l} bullet={c.b} lines={c.lines} /></Cell>
                ))}
              </SlideRow>
            </Slide>
            <Controls>
              <ChevronSide w={12} h={24} sw={1.6} />
              <PageCount><Fit w={78}>15 of 15</Fit></PageCount>
              <Icon w={12} h={24} vb="0 0 10 20" sw={1.4}><path d="M1 1l8 9-8 9" stroke="#666" /></Icon>
              <SyncButton><LivePill>LIVE</LivePill><Fit w={168}>Sync to Presenter</Fit></SyncButton>
              <Icon w={29} vb="0 0 29 29" sw={1.7}>
                <g strokeLinejoin="miter" strokeLinecap="butt"><path d="M7 11H1V1h10v5.500M13.500 7V1h8v6M7 22H1v-8.500h5" /><rect x="9" y="9" width="19" height="19" /></g>
              </Icon>
              <Spacer $w={34} />
              <Dots w={28} r={2.3} />
            </Controls>
          </Stage>
        </StageColumn>

        <ChatPanel>
          <ChatHeader><Fit w={175}>Meeting chat</Fit><Cross s={19} sw={1.4} /></ChatHeader>
          <MessageList>
            <MessageRow $mt={-9}>
              <Avatar a="KH" bg="#e2dded" fg="#42395f" />
              <Bubble $w={146} $r="8px 8px 8px 2px"><Fit w={103}>parallelism</Fit></Bubble>
            </MessageRow>
            <MessageRow $mt={3}>
              <Spacer $w={25} />
              <Bubble $w={260} $r="2px 8px 8px 8px">
                <Fit w={157}>Start the session</Fit><Fit w={218}>Open the presentation</Fit><Fit w={173}>Present the topics</Fit>
              </Bubble>
            </MessageRow>
            <Meta $own><Fit w={76}>12:05 PM</Fit></Meta>
            <MessageRow $own>
              <Bubble $own $w={253} $r="8px"><Fit w={217}>Kill him, not leave him.</Fit></Bubble>
              <SeenMark><Icon w={16} vb="0 0 16 16" sw={1.3}><circle cx="8" cy="8" r="7" /><path d="M5 8.200l2.200 2.200L11.200 6" /></Icon></SeenMark>
            </MessageRow>
            {messages.map((m) => (
              <React.Fragment key={m.a}>
                <Meta><Fit w={m.ww}>{m.who}</Fit><Fit w={76}>{m.time}</Fit>{m.edited && <Fit w={52}>Edited</Fit>}</Meta>
                <MessageRow>
                  <Avatar a={m.a} bg={m.bg} fg={m.fg} />
                  <Bubble $w={m.w} $r="8px">
                    {m.lines.map(([t, w], i) => (i ? <LastLine key={t}><Fit w={w}>{t}</Fit></LastLine> : <Fit key={t} w={w}>{t}</Fit>))}
                  </Bubble>
                </MessageRow>
              </React.Fragment>
            ))}
          </MessageList>
          <Compose>
            <Fit w={152}>Type a message</Fit>
            <ComposeTools>
              <Icon w={26} vb="0 0 26 26" sw={1.6}><path d="M1 17L6.500 1.500 10.700 13M3.200 11.500h6.500M8 25l1.300-5.500L20.500 8.300a2.700 2.700 0 0 1 4 4L13.300 23.500z" /></Icon>
              <Smile w={26} />
              <Icon w={25} vb="0 0 25 25" sw={1.6}><path d="M1.500 12.500a11 11 0 1 1 11 11h-11z" /><path d="M5.500 23c2.500-1.500 3-3.500 3-7v-4a4.300 4.300 0 1 1 4.300 4.300H8.500" /></Icon>
              <Icon w={24} vb="0 0 24 24" sw={1.7}><path d="M12 1v22M1 12h22" /></Icon>
              <ComposeDivider />
              <Icon w={26} vb="0 0 26 26" sw={1.6}><path d="M1.500 1.500L25 13 1.500 24.500 4.500 13zM4.500 13H16" /></Icon>
            </ComposeTools>
          </Compose>
        </ChatPanel>
      </Body>

      <Taskbar>
        <StartLogo />
        <SearchBox>
          <Icon w={23} vb="0 0 23 23" sw={2.6}><circle cx="10" cy="10" r="8" /><path d="M16 16l5.500 6" /></Icon>
          <Fit w={61}>Search</Fit>
          <Spacer $w={140} />
          <Poppies />
        </SearchBox>
        <AppsRow>
          {apps.map((a, i) => (
            <TaskApp key={i} $active={a.active}>{a.icon}{a.running && <RunMark $active={a.active} />}</TaskApp>
          ))}
        </AppsRow>
        <Tray>
          <Icon w={17} h={10} vb="0 0 17 10" sw={1.9}><path d="M1 9l7.500-8L16 9" /></Icon>
          <Spacer $w={27} />
          <svg width="25" height="16" viewBox="0 0 25 16">
            <path d="M7 5a7 7 0 0 1 12.500.5L12 10z" fill="#0364b8" /><path d="M5 15.500A5.300 5.300 0 0 1 4 5a7 7 0 0 1 6 .5l9 6z" fill="#0f83dc" />
            <path d="M3 15l14-9.300A5 5 0 0 1 25 11q0 4.500-4.500 4.800H5z" fill="#27a7ea" />
          </svg>
          <TrayMic><MicOff w={26} gap="#ebebf5" /></TrayMic>
          <TrayText><Fit w={34}>ENG</Fit><Fit w={18}>IN</Fit></TrayText>
          <Spacer $w={27} />
          <Icon w={25} vb="0 0 25 25" sw={1.7}><path d="M15 1.500H3.500q-2 0-2 2V18q0 2 2 2H19M7 20v4M5 24h13M14 20v4M18 3q0-2 1.500-2h3Q24 1 24 3v7h-6zM18 5.500h6M21 10v14" /></Icon>
          <Spacer $w={11} />
          <Icon w={25} h={20} vb="0 0 25 20" sw={1.7}><path d="M1 7v6h3.500L10 18V2L4.500 7zM13.500 7q2 3 0 6M17 4q4.500 6 0 12M20.500 1.500q6.500 8.500 0 17" /></Icon>
          <Spacer $w={11} />
          <Icon w={25} h={22} vb="0 0 25 22" sw={1.7}>
            <path d="M10 5h9.500q2 0 2 2v9.500q0 2.500-2.500 2.500H4q-2.500 0-2.500-2.500V12" /><path d="M5.500 0L1 7h3l-1.500 5L8 5H5z" fill="currentColor" stroke="none" />
            <path d="M22 9.500h1q1.300 0 1.300 1.200v2.500q0 1.200-1.300 1.200h-1z" fill="currentColor" /><path d="M5.500 13v2.500" />
          </Icon>
          <Spacer $w={24} />
          <TrayText $right><Fit w={76}>12:32 PM</Fit><Fit w={84}>5/27/2025</Fit></TrayText>
        </Tray>
      </Taskbar>
    </Window>
  );
}
